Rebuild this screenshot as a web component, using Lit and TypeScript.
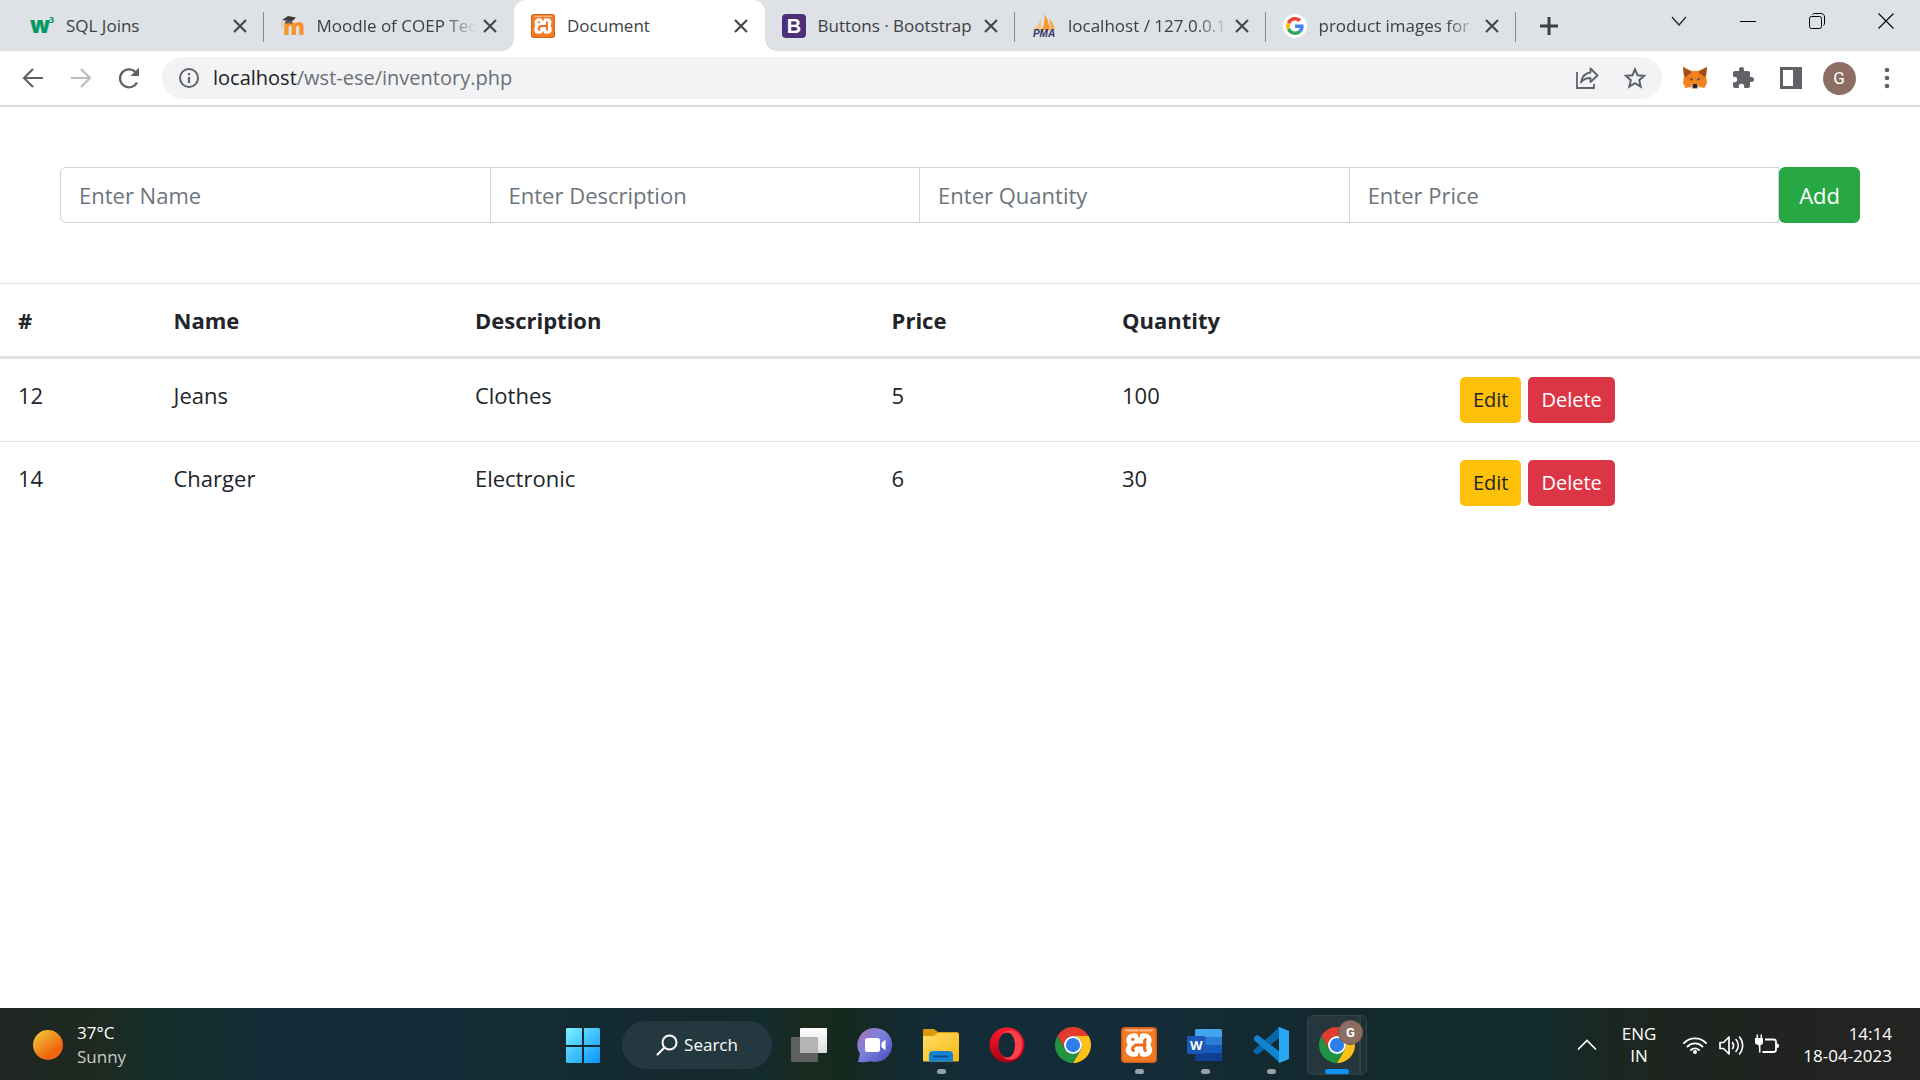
import { LitElement, html, svg, css, TemplateResult } from "lit";
import { customElement, property } from "lit/decorators.js";
import { classMap } from "lit/directives/class-map.js";

const reset = css`
  :host, *, *::before, *::after { box-sizing: border-box; }
  button { font: inherit; color: inherit; background: none; border: 0; padding: 0; margin: 0; cursor: pointer; }
  svg { display: block; flex: none; overflow: visible; }
`;

const icon = (size: number, box: string, body: unknown): TemplateResult =>
  html`<svg width=${size} height=${size} viewBox=${box} fill="none" aria-hidden="true">${body}</svg>`;

/* ---------- shared logos ---------- */

const xampp = (size: number) => icon(size, "0 0 36 36", svg`
  <rect width="36" height="36" rx="4" fill="#cf6220"/>
  <rect x="1.5" y="1.5" width="33" height="33" rx="3" fill="#f67a22"/>
  <path d="M3 2.500h30c-1 1.500-3 2-6 2H9c-3 0-5-.5-6-2z" fill="#f9b98a"/>
  <path d="M18 10.500C17 8.500 15 7.500 12.500 7.500 9 7.500 6.500 9.800 6.500 13c0 2 .8 3.500 1.800 4.700C6.800 19 6 20.800 6 22.800 6 26.200 8.500 28.500 12 28.500c2.500 0 4.800-1 6-3 1.200 2 3.500 3 6 3 3.500 0 6-2.300 6-5.700 0-2-.8-3.800-2.300-5.100 1-1.200 1.800-2.700 1.800-4.700 0-3.200-2.500-5.500-6-5.500-2.500 0-4.500 1-5.500 3z"
    fill="#fff" stroke="#fff" stroke-width="2.500" stroke-linejoin="round"/>
  <path d="M11.500 12.200h.5M12.500 23.500c-1.500-1-1.500-3 .5-4l1.500-1.500H24M24.300 12.500c-1.200 1.500-1.200 2.500-.3 5.500-.9 2.500-.9 4 .3 5.500" stroke="#ee6d1c" stroke-width="3" stroke-linecap="round" stroke-linejoin="round"/>
  <path d="M18 4.500v5M18 27v4" stroke="#f67a22" stroke-width="2" stroke-linecap="round"/>
`);

const chrome = (size: number) => icon(size, "0 0 48 48", svg`
  <path d="M24 12H44.780A24 24 0 0 0 3.220 12L13.610 30A12 12 0 0 1 24 12z" fill="#e33b2e"/>
  <path transform="rotate(120 24 24)" d="M24 12H44.780A24 24 0 0 0 3.220 12L13.610 30A12 12 0 0 1 24 12z" fill="#fbc116"/>
  <path transform="rotate(240 24 24)" d="M24 12H44.780A24 24 0 0 0 3.220 12L13.610 30A12 12 0 0 1 24 12z" fill="#229342"/>
  <circle cx="24" cy="24" r="12" fill="#fff"/>
  <circle cx="24" cy="24" r="9.500" fill="#2f7de9"/>
`);

/* ---------- favicons ---------- */

const w3 = icon(24, "0 0 24 24", svg`
  <text x="0" y="19" font-family="Open Sans, sans-serif" font-weight="800" font-size="22" fill="#059862">w</text>
  <text x="19" y="9" font-family="Open Sans, sans-serif" font-weight="700" font-size="9" fill="#059862">3</text>
`);

const moodle = icon(24, "0 0 24 24", svg`
  <text x="2" y="21" font-family="Open Sans, sans-serif" font-weight="800" font-size="22" fill="#f7922d">m</text>
  <path d="M1 6l6-4 8 1.500-4 4z" fill="#3b3b3b"/>
  <path d="M4.500 6.500l6.500 1v2.500c-2-1-4.500-1-6.500 0z" fill="#555"/>
  <path d="M1 7v7" stroke="#e8b48c" stroke-width="1"/>
`);

const bootstrap = icon(24, "0 0 24 24", svg`
  <rect width="24" height="24" rx="4" fill="#4c2f78"/>
  <text x="12" y="19" text-anchor="middle" font-family="Liberation Sans, sans-serif" font-weight="700" font-size="20" fill="#fff">B</text>
`);

const pma = icon(24, "0 0 24 24", svg`
  <path d="M9 3v13H1C5 13 8 9 9 3z" fill="#f9c27d"/>
  <path d="M12.500 0c3 5 5 10 5.500 16h-8c2-5 3-10 2.500-16z" fill="#f79a2e"/>
  <path d="M17 4c3 3 5 7 6 12h-4.500C18.500 12 18 8 17 4z" fill="#f9a94a"/>
  <text x="12" y="23" text-anchor="middle" font-family="Liberation Sans, sans-serif" font-weight="700" font-style="italic" font-size="10" fill="#33335f">PMA</text>
`);

const google = icon(24, "0 0 64 64", svg`
  <circle cx="32" cy="32" r="32" fill="#fff"/>
  <g transform="translate(8 8)">
    <path fill="#EA4335" d="M24 9.500c3.540 0 6.710 1.220 9.210 3.600l6.850-6.850C35.900 2.380 30.470 0 24 0 14.620 0 6.510 5.380 2.560 13.220l7.980 6.190C12.430 13.720 17.740 9.500 24 9.500z"/>
    <path fill="#4285F4" d="M46.980 24.550c0-1.570-.15-3.090-.38-4.550H24v9.020h12.940c-.58 2.960-2.260 5.480-4.780 7.180l7.730 6c4.510-4.180 7.090-10.360 7.090-17.650z"/>
    <path fill="#FBBC05" d="M10.530 28.590c-.48-1.450-.76-2.990-.76-4.590s.27-3.140.76-4.590l-7.980-6.190C.920 16.460 0 20.120 0 24c0 3.880.92 7.540 2.560 10.780l7.970-6.190z"/>
    <path fill="#34A853" d="M24 48c6.480 0 11.930-2.130 15.890-5.810l-7.730-6c-2.150 1.450-4.920 2.300-8.160 2.300-6.260 0-11.570-4.220-13.470-9.910l-7.980 6.190C6.510 42.620 14.620 48 24 48z"/>
  </g>
`);

/* ---------- browser toolbar icons, 24px grid ---------- */

const back = icon(24, "0 0 24 24", svg`<path d="M22 12H4M12 3l-9 9 9 9" stroke="#5f6368" stroke-width="2.200"/>`);
const forward = icon(24, "0 0 24 24", svg`<path d="M2 12h18M12 3l9 9-9 9" stroke="#babcbe" stroke-width="2.200"/>`);
const reload = icon(24, "0 0 24 24", svg`
  <path d="M20 16.500A9 9 0 1 1 18.500 6" stroke="#5f6368" stroke-width="2.300"/>
  <path d="M22 1.500V10h-8.500z" fill="#5f6368"/>`);
const info = icon(24, "0 0 24 24", svg`
  <circle cx="12" cy="12" r="9" stroke="#5f6368" stroke-width="2"/>
  <path d="M12 11v6M12 7v2.200" stroke="#5f6368" stroke-width="2.200"/>`);
const share = icon(24, "0 0 24 24", svg`
  <path d="M2 6v16h17v-4" stroke="#5f6368" stroke-width="1.800"/>
  <path d="M15.500 2.500L22.500 9.500l-7 6.500v-4C11 12 8 13.500 6 16.500 7 11 10 7 15.500 6.500z" stroke="#5f6368" stroke-width="1.800" stroke-linejoin="round"/>`);
const star = icon(24, "0 0 24 24", svg`
  <path d="M12 3.300l2.600 6 6.500.6-4.900 4.300 1.500 6.400L12 17.200l-5.700 3.400 1.500-6.400-4.900-4.300 6.500-.6z" stroke="#5f6368" stroke-width="2"/>`);
const fox = icon(24, "0 0 24 24", svg`
  <path d="M0 1l9 4h6l9-4-1 9 1 7-2.500 5-5.500-1-2 2h-4l-2-2-5.500 1L0 17l1-7z" fill="#f5841f"/>
  <path d="M0 1l9 5-6 5-2-1zM24 1l-9 5 6 5 2-1z" fill="#a0501c"/>
  <path d="M3 11l6-5 1 8-9 .500zM21 11l-6-5-1 8 9 .500z" fill="#ee7d1b"/>
  <path d="M6.500 12l3.500 1-1 2zM17.500 12L14 13l1 2z" fill="#3b3f4a"/>
  <path d="M8 20l2-2h4l2 2-2 2.500h-4z" fill="#d8c9bd"/>
  <path d="M10 18h4l.500 3-1 1h-3l-1-1z" fill="#22242a"/>`);
const puzzle = icon(24, "0 0 24 24", svg`
  <path d="M20.500 11H19V7c0-1.100-.9-2-2-2h-4V3.500a2.500 2.500 0 0 0-5 0V5H4c-1.100 0-2 .9-2 2v3.800h1.500a2.700 2.700 0 0 1 0 5.400H2V20c0 1.100.9 2 2 2h3.800v-1.500a2.700 2.700 0 0 1 5.400 0V22H17c1.100 0 2-.9 2-2v-4h1.500a2.500 2.500 0 0 0 0-5z" fill="#5f6368"/>`);
const sidePanel = icon(24, "0 0 24 24", svg`
  <path d="M1 1h22v22H1zM4 4v16h10V4z" fill="#5f6368" fill-rule="evenodd"/>`);
const dots = icon(24, "0 0 24 24", svg`
  <circle cx="12" cy="4" r="2.300" fill="#5f6368"/><circle cx="12" cy="12" r="2.300" fill="#5f6368"/><circle cx="12" cy="20" r="2.300" fill="#5f6368"/>`);
const closeTab = icon(12, "0 0 12 12", svg`<path d="M0 0l12 12M12 0L0 12" stroke="#45484c" stroke-width="2.200"/>`);
const plus = icon(18, "0 0 18 18", svg`<path d="M9 0v18M0 9h18" stroke="#3c4043" stroke-width="3"/>`);
const chevronDown = icon(16, "0 0 16 16", svg`<path d="M1 4l7 8 7-8" stroke="#222" stroke-width="1.200"/>`);
const minimise = icon(16, "0 0 16 16", svg`<path d="M0 8.500h16" stroke="#000" stroke-width="1"/>`);
const restore = icon(16, "0 0 16 16", svg`
  <rect x=".500" y="3.500" width="12" height="12" rx="2" stroke="#000"/>
  <path d="M3.500 1.500C4 .800 5 .500 6 .500h6c2 0 3.500 1.500 3.500 3.500v6c0 1-.3 1.800-1 2.500" stroke="#000"/>`);
const closeWindow = icon(16, "0 0 16 16", svg`<path d="M.500.500l15 15M15.500.500l-15 15" stroke="#000" stroke-width="1.100"/>`);

/* ---------- taskbar icons, 36px grid ---------- */

const sun = icon(30, "0 0 30 30", svg`
  <defs><linearGradient id="s" x1=".15" y1=".1" x2=".8" y2=".9"><stop stop-color="#f2c037"/><stop offset=".8" stop-color="#f0650f"/></linearGradient></defs>
  <circle cx="15" cy="15" r="15" fill="url(#s)"/>`);
const start = icon(36, "0 0 36 36", svg`
  <defs><linearGradient id="w" gradientUnits="userSpaceOnUse" x1="0" y1="0" x2="36" y2="36"><stop stop-color="#80f3ff"/><stop offset="1" stop-color="#0693ff"/></linearGradient></defs>
  <path d="M2 1h15v17H1V2zM19 1h15l1 1v16H19zM1 20h16v16H2l-1-1zM19 20h16v15l-1 1H19z" fill="url(#w)"/>`);
const lens = icon(22, "0 0 22 22", svg`<circle cx="13.500" cy="8.500" r="7" stroke="#fff" stroke-width="2"/><path d="M8.500 13.500L1.500 20.500" stroke="#fff" stroke-width="2" stroke-linecap="round"/>`);
const taskView = icon(36, "0 0 36 36", svg`
  <defs><linearGradient id="g" x1="0" y1="0" x2="0" y2="1"><stop stop-color="#fff"/><stop offset="1" stop-color="#dcdcdc"/></linearGradient></defs>
  <rect x="0" y="10" width="27" height="25" rx="1" fill="#5f5f5f"/>
  <rect x="9" y="1" width="27" height="25" rx="1" fill="url(#g)"/>
  <path d="M9 10h17l1 1v15H9z" fill="#b4b4b4"/>`);
const teams = icon(36, "0 0 36 36", svg`
  <defs><linearGradient id="t" x1="0" y1="0" x2="1" y2="1"><stop stop-color="#b06fb0"/><stop offset=".45" stop-color="#7b83dd"/><stop offset="1" stop-color="#4548b8"/></linearGradient></defs>
  <path d="M18 1a17 17 0 1 1-5 33.200c-3 .8-7 1.200-12 .8l2-8A17 17 0 0 1 18 1z" fill="url(#t)"/>
  <rect x="8" y="11" width="15" height="14" rx="2.500" fill="#fff"/>
  <path d="M24.500 16l4-3.500v11l-4-3.500z" fill="#fff"/>`);
const folder = icon(36, "0 0 36 36", svg`
  <defs><linearGradient id="f" x1="0" y1="0" x2="1" y2="1"><stop stop-color="#ffdc6b"/><stop offset="1" stop-color="#fbb90f"/></linearGradient></defs>
  <path d="M0 3.500C0 2.500.500 2 1.500 2H11l4 3h19c1 0 2 1 2 2v8H0z" fill="#dc9a0a"/>
  <path d="M0 9h11l4-3h19.500L36 7.500V33c0 1-.5 1.500-1.500 1.500h-33C.500 34.500 0 34 0 33z" fill="url(#f)"/>
  <path d="M6 34.500V28c0-3 1.500-4 4-4h16c2.500 0 4 1 4 4v6.500z" fill="#1283d3"/>
  <path d="M11 29.500h14" stroke="#0a4f92" stroke-width="2" stroke-linecap="round"/>`);
const opera = icon(36, "0 0 36 36", svg`
  <defs><linearGradient id="o" x1="0" y1="0" x2="0" y2="1"><stop stop-color="#ff1b2d"/><stop offset="1" stop-color="#a70014"/></linearGradient></defs>
  <path d="M18 0.500a17.500 17.500 0 1 0 0 35 17.500 17.500 0 0 0 0-35zm.500 5C23 5.500 26 11 26 18s-3 12.500-7.500 12.500S9.500 25 9.500 18s4-12.500 9-12.500z" fill="url(#o)" fill-rule="evenodd"/>
  <path d="M14 6.500c3-4 9-4.500 14-1a17 17 0 0 1 0 25c-5 3.500-11 3-14-1 8 3.500 12-3 12-11.500S22 3 14 6.500z" fill="#fb4149"/>`);
const word = icon(36, "0 0 36 36", svg`
  <path d="M8 3.500C8 2.500 8.500 2 9.500 2h24c1 0 1.500.500 1.500 1.500V10H8z" fill="#41a5ee"/>
  <path d="M8 10h27v8H8z" fill="#2b7cd3"/><path d="M8 18h27v8H8z" fill="#185abd"/>
  <path d="M8 26h27v6.500c0 1-.5 1.500-1.500 1.500h-24c-1 0-1.500-.5-1.500-1.500z" fill="#103f91"/>
  <rect x="0" y="9" width="18.500" height="18" rx="1.500" fill="#1b58b8"/>
  <text x="9.200" y="22.500" text-anchor="middle" font-family="Open Sans, sans-serif" font-weight="700" font-size="13" fill="#fff">W</text>`);
const vscode = icon(36, "0 0 36 36", svg`
  <path d="M1 10.500l2.500-2 2 .300L27 25v10.500L1 13z" fill="#0a7fcb"/>
  <path d="M26.500 0v11L5 27l-2 .300-2.500-2v-2z" fill="#0867ab"/>
  <path d="M1 13v-2.500l2.500-2 2 .300L27 25v10.500z" fill="#1283cf"/>
  <path d="M26.500 0L36 4v28l-9.500 4c-.5-.3-1-.7-1.300-1L26 34V2l-.800-1z" fill="#29a9f2"/>`);
const chevronUp = icon(20, "0 0 20 20", svg`<path d="M1 14.500l9-9 9 9" stroke="#fff" stroke-width="1.600"/>`);
const wifi = icon(24, "0 0 24 24", svg`
  <path d="M1 10a15.500 15.500 0 0 1 22 0M4.500 13.500a10.600 10.600 0 0 1 15 0M8 17a5.700 5.700 0 0 1 8 0" stroke="#fff" stroke-width="1.900" stroke-linecap="round"/>
  <circle cx="12" cy="19" r="2" fill="#fff"/>`);
const volume = icon(24, "0 0 24 24", svg`
  <path d="M1 9.500h3.500L10 4v17l-5.500-5.500H1z" stroke="#fff" stroke-width="1.700" stroke-linejoin="round"/>
  <path d="M13.500 9.500c1.300 1.800 1.300 4.200 0 6M17 6.500c3 3.500 3 8.500 0 12M20.500 4c4.200 5 4.200 12 0 17" stroke="#fff" stroke-width="1.600" stroke-linecap="round"/>`);
const battery = icon(24, "0 0 24 24", svg`
  <path d="M10 6.500h8.500c1.500 0 2.500 1 2.500 2.500v7.500c0 1.500-1 2.500-2.500 2.500H7.500" stroke="#fff" stroke-width="1.800"/>
  <path d="M22 10.500c1 0 2 .700 2 2.200s-1 2.300-2 2.300z" fill="#fff"/>
  <path d="M0 5h8v4.500C8 11 7 12 5.500 12v7.500H4c0-2 .2-5-.500-7.500C1.500 12 0 11 0 9.500zM1.500 1.500h1.500V5H1.500zM5.500 1.500H7V5H5.500z" fill="#fff"/>`);

/* ---------- browser window ---------- */

interface Tab { title: string; icon: TemplateResult; active?: boolean; fade?: boolean; plain?: boolean; }

const tabs: Tab[] = [
  { title: "SQL Joins", icon: w3 },
  { title: "Moodle of COEP Tech", icon: moodle, fade: true, plain: true },
  { title: "Document", icon: xampp(24), active: true, plain: true },
  { title: "Buttons · Bootstrap", icon: bootstrap },
  { title: "localhost / 127.0.0.1 /", icon: pma, fade: true },
  { title: "product images for", icon: google, fade: true },
];

@customElement("browser-tabs")
class BrowserTabs extends LitElement {
  static styles = [reset, css`
    :host { display: flex; height: 51px; background: #dee1e6; padding-left: 13px; color: #3c4043; font-size: 17px; }
    .tabs { display: flex; flex: 0 1 1503px; min-width: 0; }
    .tab { position: relative; flex: 1 1 0; min-width: 0; display: flex; align-items: center; gap: 8px; padding: 0 18px 0 17px; }
    .label { flex: 1; min-width: 0; display: flex; align-items: center; gap: 12px; height: 100%; text-align: left; }
    .title { flex: 1; min-width: 0; overflow: hidden; white-space: nowrap; line-height: 24px; }
    .fade { mask-image: linear-gradient(to right, #000 80%, transparent); -webkit-mask-image: linear-gradient(to right, #000 80%, transparent); }
    .tab::after { content: ""; position: absolute; right: 0; top: 12px; width: 1px; height: 30px; background: #868a90; }
    .tab.plain::after { display: none; }
    .active { background: #fff; border-radius: 12px 12px 0 0; }
    .active::before { content: ""; position: absolute; left: -12px; right: -12px; bottom: 0; height: 12px; pointer-events: none;
      background: radial-gradient(circle at 0 0, transparent 12px, #fff 12px) left / 12px 12px no-repeat,
                  radial-gradient(circle at 100% 0, transparent 12px, #fff 12px) right / 12px 12px no-repeat; }
    .new { width: 66px; display: grid; place-items: center; }
    .window { margin-left: auto; display: flex; height: 42px; }
    .window button { width: 69px; display: grid; place-items: center; }
  `];
  render() {
    return html`
      <div class="tabs" role="tablist">
        ${tabs.map((t) => html`
          <div class=${classMap({ tab: true, active: !!t.active, plain: !!t.plain })}>
            <button class="label" role="tab" aria-selected=${t.active ? "true" : "false"}>
              ${t.icon}<span class=${classMap({ title: true, fade: !!t.fade })}>${t.title}</span>
            </button>
            <button aria-label="Close tab">${closeTab}</button>
          </div>`)}
      </div>
      <button class="new" aria-label="New tab">${plus}</button>
      <div class="window">
        <button aria-label="Search tabs">${chevronDown}</button>
        <button aria-label="Minimise">${minimise}</button>
        <button aria-label="Restore">${restore}</button>
        <button aria-label="Close">${closeWindow}</button>
      </div>`;
  }
}

@customElement("browser-toolbar")
class BrowserToolbar extends LitElement {
  static styles = [reset, css`
    :host { display: flex; align-items: center; height: 56px; padding: 0 9px; background: #fff; border-bottom: 2px solid #d9dadc; }
    button { width: 48px; height: 42px; display: grid; place-items: center; }
    .address { flex: 1; min-width: 0; display: flex; align-items: center; height: 42px; margin: 0 9px; padding-right: 3px; background: #f1f3f4; border-radius: 21px; }
    .site { width: 51px; padding-left: 3px; }
    .url { flex: 1; min-width: 0; white-space: nowrap; font-size: 20px; line-height: 28px; color: #6b6f74; outline: 0; }
    .host { color: #202124; }
    .avatar { width: 33px; height: 33px; border-radius: 50%; background: #8d6e63; color: #fff; display: grid; place-items: center; font: 17px/33px Roboto, sans-serif; }
  `];
  render() {
    return html`
      <button aria-label="Back">${back}</button>
      <button aria-label="Forward">${forward}</button>
      <button aria-label="Reload">${reload}</button>
      <div class="address">
        <button class="site" aria-label="Site information">${info}</button>
        <div class="url" role="textbox" aria-label="Address" contenteditable="true" spellcheck="false"><span class="host">localhost</span>/wst-ese/inventory.php</div>
        <button aria-label="Share">${share}</button>
        <button aria-label="Bookmark">${star}</button>
      </div>
      <button aria-label="Wallet">${fox}</button>
      <button aria-label="Extensions">${puzzle}</button>
      <button aria-label="Side panel">${sidePanel}</button>
      <button aria-label="Profile"><span class="avatar">G</span></button>
      <button aria-label="Menu">${dots}</button>`;
  }
}

/* ---------- inventory page ---------- */

interface Item { id: number; name: string; description: string; price: number; quantity: number; }

@customElement("inventory-page")
class InventoryPage extends LitElement {
  @property({ attribute: false }) items: Item[] = [
    { id: 12, name: "Jeans", description: "Clothes", price: 5, quantity: 100 },
    { id: 14, name: "Charger", description: "Electronic", price: 6, quantity: 30 },
  ];
  static styles = [reset, css`
    :host { display: block; flex: 1; background: #fff; color: #212529; font-size: 22px; line-height: 36px; }
    .form { display: flex; padding: 60px; }
    .field { flex: 1 1 0; min-width: 0; height: 56px; margin: 0 0 0 -1px; padding: 0 18px; border: 1px solid #ced4da; border-radius: 0; background: #fff; font: inherit; color: #495057; outline: 0; }
    .field:first-child { margin-left: 0; border-radius: 6px 0 0 6px; }
    .field::placeholder { color: #6c757d; opacity: 1; }
    .add { height: 56px; padding: 0 20px; border-radius: 6px; background: #28a745; color: #fff; }
    .table { width: 100%; border-collapse: separate; border-spacing: 0; table-layout: fixed; }
    .id { width: 8.1%; } .name { width: 15.7%; } .desc { width: 21.7%; } .price { width: 12%; } .qty { width: 17.6%; }
    th, td { text-align: left; vertical-align: top; padding: 18px; border-top: 1px solid #dee2e6; }
    th { font-weight: 700; border-bottom: 3px solid #dee2e6; }
    tbody tr:first-child td { border-top: 0; }
    .actions { display: flex; gap: 7px; }
    .small { height: 46px; padding: 0 13px; border-radius: 5px; font-size: 20px; line-height: 46px; }
    .edit { background: #ffc107; color: #212529; }
    .delete { background: #dc3545; color: #fff; }
  `];
  render() {
    return html`
      <form class="form" @submit=${(e: Event) => e.preventDefault()}>
        ${["Name", "Description", "Quantity", "Price"].map((f) => html`
          <input class="field" type="text" name=${f.toLowerCase()} placeholder=${"Enter " + f} aria-label=${"Enter " + f}>`)}
        <button class="add" type="submit">Add</button>
      </form>
      <table class="table">
        <colgroup><col class="id"><col class="name"><col class="desc"><col class="price"><col class="qty"><col></colgroup>
        <thead><tr><th>#</th><th>Name</th><th>Description</th><th>Price</th><th>Quantity</th><th></th></tr></thead>
        <tbody>
          ${this.items.map((i) => html`
            <tr>
              <td>${i.id}</td><td>${i.name}</td><td>${i.description}</td><td>${i.price}</td><td>${i.quantity}</td>
              <td><div class="actions">
                <button class="small edit">Edit</button>
                <button class="small delete">Delete</button>
              </div></td>
            </tr>`)}
        </tbody>
      </table>`;
  }
}

/* ---------- desktop taskbar ---------- */

const apps = [
  { name: "Task view", icon: taskView }, { name: "Chat", icon: teams },
  { name: "File Explorer", icon: folder, running: true }, { name: "Opera", icon: opera },
  { name: "Chrome", icon: chrome(36) }, { name: "XAMPP", icon: xampp(36), running: true },
  { name: "Word", icon: word, running: true }, { name: "Visual Studio Code", icon: vscode, running: true },
  { name: "Chrome, profile G", icon: chrome(36), active: true },
];

@customElement("desktop-taskbar")
class DesktopTaskbar extends LitElement {
  static styles = [reset, css`
    :host { display: grid; grid-template-columns: 1fr auto 1fr; align-items: center; height: 72px; padding-top: 2px; color: #fff; font-size: 17px; line-height: 22px;
      background: linear-gradient(90deg, #1e2524 0%, #1f291f 5%, #132e2a 8%, #132b38 15%, #142c36 25%, #13292d 37%, #142b2e 40%, #1a2a1d 42%, #14291f 44%, #132b35 48%, #142c38 60%, #13292d 70%, #122c2d 80%, #1c2620 84%, #20231f 92%, #252424 100%); }
    .side { display: flex; align-items: center; min-width: 0; }
    .weather { display: flex; align-items: center; gap: 14px; padding-left: 33px; text-align: left; line-height: 24px; }
    .sub { color: #c9cccb; }
    .center { display: flex; align-items: center; }
    .app { position: relative; width: 66px; height: 60px; display: grid; place-items: center; }
    .app > svg { position: relative; }
    .app.running::after { content: ""; position: absolute; left: 29px; bottom: 1px; width: 9px; height: 5px; border-radius: 3px; background: #98a1a5; }
    .app.active::after { content: ""; position: absolute; left: 21px; bottom: 1px; width: 24px; height: 5px; border-radius: 3px; background: #0a93ff; }
    .app.active::before { content: ""; position: absolute; left: 3px; top: 0; width: 60px; height: 60px; border-radius: 6px; border: 1px solid #33454a; background: linear-gradient(90deg, #25373d 51px, #33454a 51px 53px, #1d3035 53px); }
    .badge { position: absolute; left: 35px; top: 6px; width: 23px; height: 23px; border-radius: 50%; background: #8d6e63; box-shadow: 0 0 0 1px #75594f; color: #fff; font: 700 13px/23px Roboto, sans-serif; }
    .search { width: 150px; height: 48px; margin: 0 4px 0 6px; border-radius: 24px; background: #24383f; display: flex; align-items: center; justify-content: center; gap: 6px; }
    .tray { justify-content: flex-end; padding-right: 28px; }
    .up { width: 48px; display: grid; place-items: center; }
    .lang { width: 56px; text-align: center; }
    .status { display: flex; gap: 12px; margin: 0 4px 0 16px; }
    .clock { width: 109px; text-align: right; white-space: nowrap; }
    .line { display: block; }
  `];
  render() {
    return html`
      <div class="side">
        <button class="weather">${sun}<span><span class="line">37°C</span><span class="line sub">Sunny</span></span></button>
      </div>
      <div class="center">
        <button class="app" aria-label="Start">${start}</button>
        <button class="search">${lens}<span>Search</span></button>
        ${apps.map((a) => html`
          <button class=${classMap({ app: true, running: !!a.running, active: !!a.active })} aria-label=${a.name}>
            ${a.icon}${a.active ? html`<span class="badge">G</span>` : ""}
          </button>`)}
      </div>
      <div class="side tray">
        <button class="up" aria-label="Hidden icons">${chevronUp}</button>
        <button class="lang"><span class="line">ENG</span><span class="line">IN</span></button>
        <button class="status" aria-label="Network, volume and battery">${wifi}${volume}${battery}</button>
        <button class="clock"><span class="line">14:14</span><span class="line">18-04-2023</span></button>
      </div>`;
  }
}

@customElement("app-root")
class AppRoot extends LitElement {
  static styles = css`
    :host { display: flex; flex-direction: column; min-height: 100vh; font-family: "Segoe UI", "Open Sans", "Noto Sans", sans-serif; }
  `;
  render() {
    return html`
      <browser-tabs></browser-tabs>
      <browser-toolbar></browser-toolbar>
      <inventory-page></inventory-page>
      <desktop-taskbar></desktop-taskbar>`;
  }
}
